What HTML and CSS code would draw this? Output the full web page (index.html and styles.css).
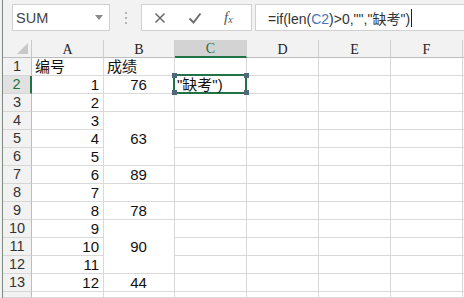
FILE: index.html
```html
<!DOCTYPE html>
<html>
<head>
<meta charset="utf-8">
<link rel="stylesheet" href="styles.css">
</head>
<body>
<div class="app">
  <div class="stripe"></div>
  <div class="main">
    <div class="toolbar">
      <div class="namebox">
        <span class="name">SUM</span>
        <svg class="caret" width="8" height="5" viewBox="0 0 8 5"><path d="M0 0h8L4 5z" fill="#8a8a8a"/></svg>
      </div>
      <div class="dots"><i></i><i></i><i></i></div>
      <div class="btns">
        <svg width="12" height="12" viewBox="0 0 12 12"><path d="M1.5 1.5l9 9M10.5 1.5l-9 9" stroke="#6e6e6e" stroke-width="1.6" fill="none"/></svg>
        <svg width="14" height="12" viewBox="0 0 14 12"><path d="M1.5 6.5l4 4L12.5 1.5" stroke="#6e6e6e" stroke-width="2" fill="none"/></svg>
        <span class="fx">f<sub>x</sub></span>
      </div>
      <div class="formula">
        <span>=if(len(<span class="ref">C2</span>)&gt;0,"","缺考")</span><span class="cursor"></span>
      </div>
    </div>
    <div class="sheet">
      <div class="corner"><svg width="11" height="11" viewBox="0 0 11 11"><path d="M11 0V11H0z" fill="#c8c8c8"/></svg></div>
      <div class="ch">A</div><div class="ch">B</div><div class="ch sel">C</div><div class="ch">D</div><div class="ch">E</div><div class="ch">F</div><div class="ch end"></div>

      <div class="rh">1</div><div class="c l">编号</div><div class="c l">成绩</div><div class="c"></div><div class="c"></div><div class="c"></div><div class="c"></div><div class="c end"></div>
      <div class="rh act">2</div><div class="c r">1</div><div class="c m">76</div><div class="c active"><span class="txt">"缺考")</span><i class="h h1"></i><i class="h h2"></i><i class="h h3"></i><i class="h h4"></i></div><div class="c"></div><div class="c"></div><div class="c"></div><div class="c end"></div>
      <div class="rh">3</div><div class="c r">2</div><div class="c"></div><div class="c"></div><div class="c"></div><div class="c"></div><div class="c"></div><div class="c end"></div>
      <div class="rh">4</div><div class="c r">3</div><div class="c m span3">63</div><div class="c"></div><div class="c"></div><div class="c"></div><div class="c"></div><div class="c end"></div>
      <div class="rh">5</div><div class="c r">4</div><div class="c"></div><div class="c"></div><div class="c"></div><div class="c"></div><div class="c end"></div>
      <div class="rh">6</div><div class="c r">5</div><div class="c"></div><div class="c"></div><div class="c"></div><div class="c"></div><div class="c end"></div>
      <div class="rh">7</div><div class="c r">6</div><div class="c m">89</div><div class="c"></div><div class="c"></div><div class="c"></div><div class="c"></div><div class="c end"></div>
      <div class="rh">8</div><div class="c r">7</div><div class="c"></div><div class="c"></div><div class="c"></div><div class="c"></div><div class="c"></div><div class="c end"></div>
      <div class="rh">9</div><div class="c r">8</div><div class="c m">78</div><div class="c"></div><div class="c"></div><div class="c"></div><div class="c"></div><div class="c end"></div>
      <div class="rh">10</div><div class="c r">9</div><div class="c m span3">90</div><div class="c"></div><div class="c"></div><div class="c"></div><div class="c"></div><div class="c end"></div>
      <div class="rh">11</div><div class="c r">10</div><div class="c"></div><div class="c"></div><div class="c"></div><div class="c"></div><div class="c end"></div>
      <div class="rh">12</div><div class="c r">11</div><div class="c"></div><div class="c"></div><div class="c"></div><div class="c"></div><div class="c end"></div>
      <div class="rh">13</div><div class="c r">12</div><div class="c m">44</div><div class="c"></div><div class="c"></div><div class="c"></div><div class="c"></div><div class="c end"></div>
      <div class="rh"></div><div class="c"></div><div class="c"></div><div class="c"></div><div class="c"></div><div class="c"></div><div class="c"></div><div class="c end"></div>
    </div>
  </div>
</div>
</body>
</html>
```

FILE: styles.css
```css
* { box-sizing: border-box; margin: 0; padding: 0; }
html, body { width: 464px; height: 298px; overflow: hidden; background: #fff; }
body { font-family: "Liberation Sans", "Noto Sans CJK SC", sans-serif; color: #222; }

.app { display: flex; height: 298px; }
.stripe { width: 3px; flex: none; background: #f1f1f1; border-right: 1px solid #7d8a82; }
.main { flex: 1; display: flex; flex-direction: column; min-width: 0; }

.toolbar { height: 40px; background: #f2f2f2; display: flex; align-items: flex-start; padding-top: 4px; }
.namebox { margin-left: 9px; width: 98px; height: 27px; background: #fff; border: 1px solid #d0d0d0; display: flex; align-items: center; justify-content: space-between; padding: 0 6px 0 3px; }
.name { font-size: 14.5px; color: #444; }
.caret { margin-top: -1px; }
.dots { width: 31px; height: 27px; display: flex; flex-direction: column; align-items: center; justify-content: center; gap: 3px; }
.dots i { display: block; width: 2px; height: 2px; background: #b5b5b5; }
.btns { width: 111px; height: 27px; background: #fff; border: 1px solid #d0d0d0; display: flex; align-items: center; padding-left: 12px; gap: 22px; }
.fx { font-family: "Liberation Serif", serif; font-style: italic; font-size: 15px; color: #555; }
.fx sub { font-size: 10px; vertical-align: baseline; position: relative; top: 1px; }
.formula { flex: 1; margin-left: 3px; height: 27px; background: #fff; border: 1px solid #d0d0d0; border-right: none; display: flex; align-items: center; padding-left: 12px; font-size: 14px; color: #333; }
.ref { color: #4a76b8; }
.cursor { display: inline-block; width: 1px; height: 18px; background: #222; margin-left: 1px; }

.sheet { display: grid; grid-template-columns: 29px 72px 71px 72px 72px 72px 72px 1fr; grid-template-rows: 18px repeat(13, 18px) 1fr; flex: 1; background: #fff; }

.corner { background: #f2f2f2; border-right: 1px solid #c9c9c9; border-bottom: 1px solid #bdbdbd; display: flex; align-items: flex-end; justify-content: flex-end; padding: 0 3px 3px 0; }
.ch { background: #f2f2f2; border-right: 1px solid #cfcfcf; border-bottom: 1px solid #bdbdbd; font-family: "Liberation Serif", serif; font-size: 14px; color: #222; display: flex; align-items: center; justify-content: center; padding-top: 2px; }
.ch.sel { background: #d3d3d3; border-bottom: 2px solid #217346; color: #217346; }
.ch.end { border-right: none; }

.rh { background: #f2f2f2; border-right: 1px solid #bdbdbd; border-bottom: 1px solid #d6d6d6; font-family: "Liberation Sans", sans-serif; font-size: 14.5px; color: #333; display: flex; align-items: center; justify-content: center; line-height: 1; }
.rh.act { background: #e1e1e1; border-right: 2px solid #217346; color: #217346; }

.c { border-right: 1px solid #d9d9d9; border-bottom: 1px solid #d9d9d9; font-family: "Liberation Sans", "Noto Sans CJK SC", sans-serif; font-size: 15px; line-height: 1; color: #111; display: flex; align-items: center; padding: 0 4px 0 3px; white-space: nowrap; }
.c.end { border-right: none; }
.c.l { justify-content: flex-start; }
.c.r { justify-content: flex-end; }
.c.m { justify-content: center; }
.c.span3 { grid-row: span 3; }

.c.active { position: relative; z-index: 2; padding-left: 2px; }
.c.active::before { content: ""; position: absolute; left: -2px; top: -2px; right: -1px; bottom: -1px; border: 2px solid #217346; }
.txt { position: relative; }
.h { position: absolute; z-index: 3; width: 5px; height: 5px; background: #51687a; }
.h1 { left: -3px; top: -3px; }
.h2 { right: -3px; top: -3px; }
.h3 { left: -3px; bottom: -2px; }
.h4 { right: -3px; bottom: -2px; }
```
